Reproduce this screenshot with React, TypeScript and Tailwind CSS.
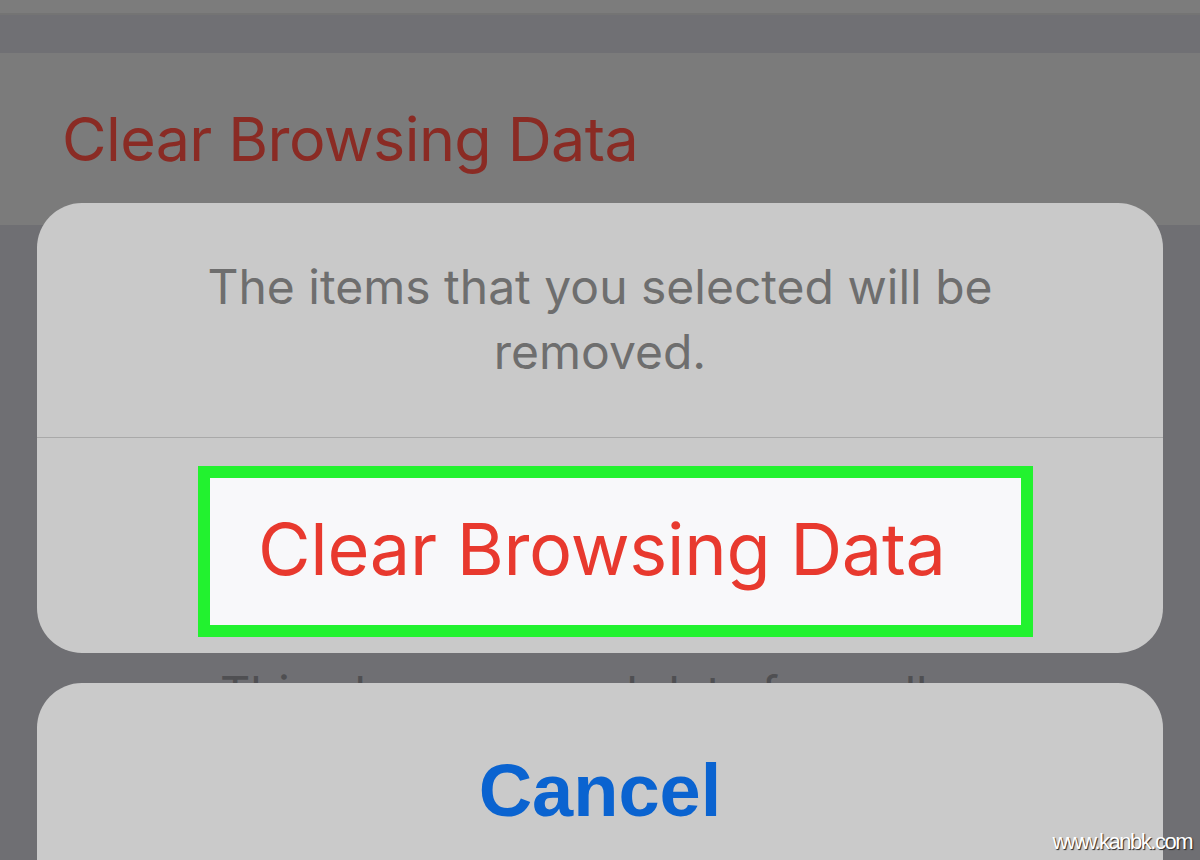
import React from "react";

const font = { fontFamily: "Inter, 'Noto Sans', sans-serif" };

const App = () => {
  return (
    <div
      className="relative w-[1200px] h-[860px] overflow-hidden bg-[#6f6f73]"
      style={font}
    >
      {/* list behind the sheet */}
      <div className="h-[13px] bg-[#7c7c7c]"></div>
      <div className="h-[2px] bg-[#747474]"></div>
      <div className="h-[38px] bg-[#707074]"></div>
      <div className="h-[172px] bg-[#7b7b7b] pl-[62px] pt-[48px]">
        <div className="text-[61px] leading-[76px] text-[#8a2b24] tracking-[-0.6px]">
          Clear Browsing Data
        </div>
      </div>

      {/* action sheet */}
      <div className="relative mx-[37px] -mt-[22px] h-[450px] rounded-[45px] bg-[#c9c9c9] flex flex-col">
        <div className="h-[234px] flex flex-col items-center pt-[51px] text-[48px] leading-[65px] text-[#6e6e6e] text-center">
          <div>The items that you selected will be</div>
          <div>removed.</div>
        </div>
        <div className="h-px bg-[#a9a9a9]"></div>
        <div className="flex-1 pt-[28px] pl-[161px]">
          <div className="w-[835px] h-[171px] border-[12px] border-[#22f22f] bg-[#f8f8fa] flex items-center pl-[48px]">
            <span className="text-[72px] text-[#e8392e] tracking-[-0.3px] pb-[6px]">
              Clear Browsing Data
            </span>
          </div>
        </div>
      </div>

      {/* text peeking between the two sheets */}
      <div className="h-[30px] overflow-hidden pl-[220px]">
        <div className="pt-[12px] text-[47px] leading-[56px] text-[#4f4f52]">
          This clears synced data from all
        </div>
      </div>

      <div className="mx-[37px] h-[300px] rounded-[45px] bg-[#cacaca] flex justify-center pt-[63px]">
        <span
          className="text-[74px] font-bold text-[#0a63d0] leading-[90px]"
          style={{ fontFamily: "'Liberation Sans', Arial, sans-serif" }}
        >
          Cancel
        </span>
      </div>

      <div
        className="absolute right-[8px] bottom-[2px] text-[22px] text-white tracking-[-1.5px] [text-shadow:1px_1px_1px_#222]"
        style={{ fontFamily: "'Liberation Sans', Arial, sans-serif" }}
      >
        www.kanbk.com
      </div>
    </div>
  );
};

export default App;
